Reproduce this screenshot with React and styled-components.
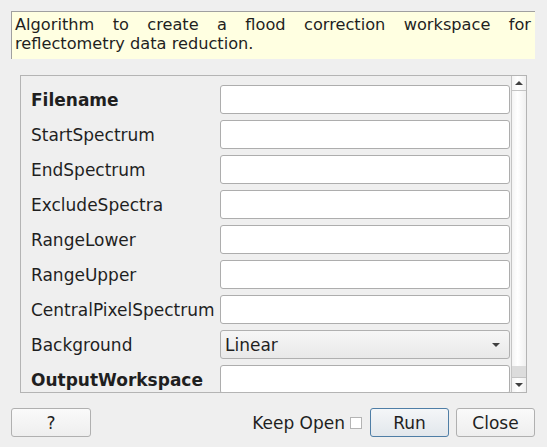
import React from "react";
import styled, { createGlobalStyle } from "styled-components";

const GlobalStyle = createGlobalStyle`
  html, body {
    margin: 0;
    padding: 0;
    background: #efefef;
    font-family: "DejaVu Sans", "Liberation Sans", sans-serif;
    color: #1f1f1f;
  }
`;

const Dialog = styled.div`
  width: 547px;
  height: 447px;
  box-sizing: border-box;
  padding: 11px 12px 0 11px;
  display: flex;
  flex-direction: column;
`;

const Description = styled.div`
  height: 48px;
  box-sizing: border-box;
  background: #ffffe1;
  border-left: 1px solid #a0a0a0;
  border-top: 1px solid #a0a0a0;
  padding: 3px 4px 0 3px;
  font-size: 16.2px;
  line-height: 19px;
  text-align: justify;
  text-align-last: left;
`;

const ScrollArea = styled.div`
  margin: 16px 8px 0 9px;
  height: 318px;
  box-sizing: border-box;
  border: 1px solid #b4b4b4;
  display: flex;
  overflow: hidden;
`;

const Form = styled.div`
  flex: 1;
  padding: 9px 1px 0 10px;
  display: flex;
  flex-direction: column;
  gap: 6px;
`;

const Row = styled.div`
  display: flex;
  align-items: center;
  height: 29px;
  flex-shrink: 0;
`;

const Label = styled.div`
  width: 189px;
  font-size: 17px;
  font-weight: ${({ $bold }) => ($bold ? "bold" : "normal")};
  white-space: nowrap;
`;

const Field = styled.div`
  flex: 1;
  height: 29px;
  box-sizing: border-box;
  background: #ffffff;
  border: 1px solid #adadad;
  border-radius: 3px;
`;

const Combo = styled.div`
  flex: 1;
  height: 29px;
  box-sizing: border-box;
  border: 1px solid #b0b0b0;
  border-radius: 3px;
  background: linear-gradient(#f6f6f6, #e9e9e9);
  display: flex;
  align-items: center;
  justify-content: space-between;
  padding: 0 9px 0 4px;
  font-size: 17px;
`;

const Arrow = styled.span`
  width: 0;
  height: 0;
  border-left: 4px solid transparent;
  border-right: 4px solid transparent;
  border-${({ $up }) => ($up ? "bottom" : "top")}: 4px solid #404040;
`;

const ScrollBar = styled.div`
  width: 14px;
  border-left: 1px solid #c4c4c4;
  background: linear-gradient(to right, #f4f4f4, #ffffff 40%, #f0f0f0);
  display: flex;
  flex-direction: column;
`;

const ScrollButton = styled.div`
  height: 14px;
  flex-shrink: 0;
  display: flex;
  align-items: center;
  justify-content: center;
  border-${({ $top }) => ($top ? "bottom" : "top")}: 1px solid #c4c4c4;
`;

const Track = styled.div`
  flex: 1;
  display: flex;
  flex-direction: column;
  justify-content: flex-end;
`;

const Thumb = styled.div`
  height: 11px;
  background: #dcdcdc;
`;

const Footer = styled.div`
  margin-top: 15px;
  display: flex;
  align-items: center;
  height: 29px;
`;

const Button = styled.button`
  height: 29px;
  width: ${({ $w }) => $w}px;
  box-sizing: border-box;
  border: 1px solid ${({ $primary }) => ($primary ? "#4f7ea6" : "#b0b0b0")};
  border-radius: 3px;
  background: ${({ $primary }) =>
    $primary ? "linear-gradient(#f4f6f8, #e2e7ec)" : "linear-gradient(#fafafa, #eeeeee)"};
  font-family: "DejaVu Sans", "Liberation Sans", sans-serif;
  font-size: 17px;
  color: #1f1f1f;
  padding: 0;
  margin-left: ${({ $ml }) => $ml || 0}px;
`;

const Spacer = styled.div`
  flex: 1;
`;

const KeepOpen = styled.label`
  font-size: 17px;
  display: flex;
  align-items: center;
  gap: 5px;
`;

const CheckBox = styled.span`
  width: 12px;
  height: 12px;
  box-sizing: border-box;
  border: 1px solid #b4b4b4;
  background: #fff;
  display: inline-block;
`;

const fields = [
  { name: "Filename", bold: true },
  { name: "StartSpectrum" },
  { name: "EndSpectrum" },
  { name: "ExcludeSpectra" },
  { name: "RangeLower" },
  { name: "RangeUpper" },
  { name: "CentralPixelSpectrum" },
  { name: "Background", combo: "Linear" },
  { name: "OutputWorkspace", bold: true },
];

export default function App() {
  return (
    <>
      <GlobalStyle />
      <Dialog>
        <Description>
          Algorithm to create a flood correction workspace for reflectometry data reduction.
        </Description>
        <ScrollArea>
          <Form>
            {fields.map((f) => (
              <Row key={f.name}>
                <Label $bold={f.bold}>{f.name}</Label>
                {f.combo ? (
                  <Combo>
                    {f.combo}
                    <Arrow />
                  </Combo>
                ) : (
                  <Field />
                )}
              </Row>
            ))}
          </Form>
          <ScrollBar>
            <ScrollButton $top>
              <Arrow $up />
            </ScrollButton>
            <Track>
              <Thumb />
            </Track>
            <ScrollButton>
              <Arrow />
            </ScrollButton>
          </ScrollBar>
        </ScrollArea>
        <Footer>
          <Button $w={80}>?</Button>
          <Spacer />
          <KeepOpen>
            Keep Open
            <CheckBox />
          </KeepOpen>
          <Button $w={79} $primary $ml={8}>
            Run
          </Button>
          <Button $w={79} $ml={7}>
            Close
          </Button>
        </Footer>
      </Dialog>
    </>
  );
}
